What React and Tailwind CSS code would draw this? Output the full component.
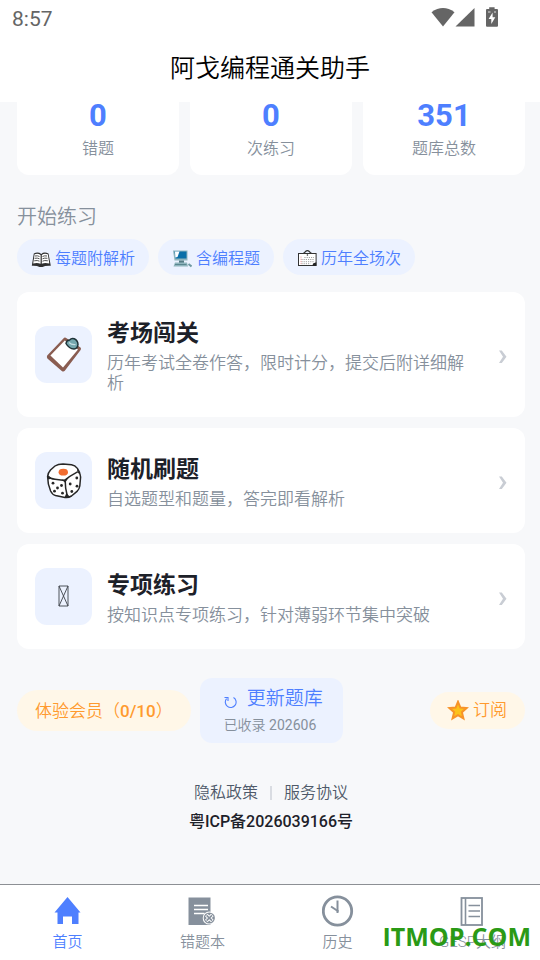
import clsx from 'clsx';

const stats = [
    { value: '0', label: '错题' },
    { value: '0', label: '次练习' },
    { value: '351', label: '题库总数' },
];

const chips = [
    { label: '每题附解析', Icon: BookIcon },
    { label: '含编程题', Icon: ComputerIcon },
    { label: '历年全场次', Icon: CalendarIcon },
];

const modes = [
    { title: '考场闯关', desc: '历年考试全卷作答，限时计分，提交后附详细解析', Icon: ClipboardIcon },
    { title: '随机刷题', desc: '自选题型和题量，答完即看解析', Icon: DiceIcon },
    { title: '专项练习', desc: '按知识点专项练习，针对薄弱环节集中突破', Icon: MissingIcon },
];

const tabs = [
    { label: '首页', Icon: HomeIcon, active: true },
    { label: '错题本', Icon: WrongBookIcon },
    { label: '历史', Icon: ClockIcon },
    { label: 'GESP大纲', Icon: OutlineIcon },
];

function BookIcon() {
    return (
        <svg viewBox="0 0 20 20" className="h-5 w-5" aria-hidden="true">
            <path d="M0.8 16.8 L2.8 4.5 Q7 2.5 10.3 5 Q13 2.5 17.5 4.5 L19.8 16.8 Q14 16.5 11.5 18 H8.5 Q6 16.5 0.8 16.8 Z" fill="#2f2f2f" />
            <path d="M3.6 5.2 Q7 4 9.6 6 V14.8 Q6 13.2 2.2 14.6 Z" fill="#fff" />
            <path d="M16.8 5.2 Q13 4 10.8 6 V14.8 Q14 13.2 18.3 14.6 Z" fill="#fff" />
            <path d="M4 7 Q6.5 6.4 8.5 7.5 M3.6 9.3 Q6.5 8.7 8.5 9.8 M3.2 11.8 Q6.5 11 8.5 12.2 M16 7 Q13.5 6.4 11.5 7.5 M16.4 9.3 Q13.5 8.7 11.5 9.8 M16.8 11.8 Q13.5 11 11.5 12.2" fill="none" stroke="#555" strokeWidth="1" />
        </svg>
    );
}

function ComputerIcon() {
    return (
        <svg viewBox="0 0 20 20" className="h-5 w-5" aria-hidden="true">
            <path d="M1 1.5 H15.5 V11.5 H2.5 Z" fill="#8fb5bd" />
            <path d="M2.5 2.5 H14.5 V9.5 H3.5 Z" fill="#0a6fa8" />
            <path d="M3 2.5 H7.5 L5.5 8 L3.3 8.5 Z" fill="#fff" />
            <path d="M7 11.5 H12 V14 H7 Z" fill="#557b84" />
            <path d="M3 13.5 H15 L16 17.5 H1.5 Z" fill="#8fb5bd" />
            <path d="M3 15.5 H14.5" stroke="#5b8790" strokeWidth="1" />
            <path d="M16.5 15 L19.5 17.5" stroke="#6f99a2" strokeWidth="2" />
        </svg>
    );
}

function CalendarIcon() {
    return (
        <svg viewBox="0 0 20 20" className="h-5 w-5" aria-hidden="true">
            <path d="M6.2 4.5 Q7.5 4 8.5 2.5 Q10.4 0.7 12.3 2.5 Q13.3 4 14.8 4.5" fill="none" stroke="#333" strokeWidth="1.3" />
            <rect x="1.5" y="4.5" width="17.6" height="12" fill="#fff" stroke="#333" strokeWidth="1" />
            <circle cx="10.4" cy="6" r="0.8" fill="#333" />
            <path d="M7.4 8.5 H17 M4.4 10.5 H17 M4.4 12.7 H17 M4.4 14.7 H13.4" stroke="#999" strokeWidth="0.9" strokeDasharray="1.2 1" />
            <path d="M4 7.5 V15" stroke="#f3a2a2" strokeWidth="1" strokeDasharray="1.2 1" />
            <path d="M19.3 13.3 V16.7 H15.5 L16 14.5 Z" fill="#222" />
        </svg>
    );
}

function ClipboardIcon() {
    return (
        <svg viewBox="0 0 36 36" className="h-9 w-9" aria-hidden="true">
            <path d="M19.8 0.8 L34.5 10.5 Q35.5 11.5 34.6 13 L18.8 33.8 Q17.5 35.2 15.8 34 L1.4 21.5 Q0.4 20 1.2 18.5 L17.4 1.4 Q18.5 0.2 19.8 0.8 Z" fill="#8a5d51" />
            <path d="M18.8 3.6 L32 12.6 L17 30.6 L4.4 18.6 Z" fill="#fff" />
            <path d="M20 6.5 Q20.5 3.2 23.6 3 Q25.5 0.8 28.2 1.8 Q31.8 3.4 32 7.5 Q31.5 11.6 28 12 Q23 11.8 20 6.5 Z" fill="#74a7ae" stroke="#1f3338" strokeWidth="1.5" />
            <path d="M23 5.5 Q25.5 8 29.5 7.5" fill="none" stroke="#c5dfe3" strokeWidth="1.2" />
        </svg>
    );
}

function DiceIcon() {
    return (
        <svg viewBox="0 0 36 36" className="h-9 w-9" aria-hidden="true">
            <path d="M1.6 13.5 Q1.8 10 4.5 7 L9 3 Q12 0.9 17 0.9 L25.5 1.8 Q29 2.4 31.4 5.4 Q34.4 9.6 34.6 14 L33.8 23 Q33.4 26 31 28.4 L25.5 33 Q22.5 34.9 19 34.4 L9.5 32.6 Q6.4 31.8 4.6 28 Q1.6 21 1.6 13.5 Z" fill="#fff" stroke="#272727" strokeWidth="1.5" />
            <path d="M2 13.6 Q4 15.6 9 16.2 L18.6 17.4 Q23.5 13 31.5 8.8 M19.2 17.5 Q19 25 21.5 34" fill="none" stroke="#272727" strokeWidth="1.5" />
            <path d="M15.5 16.6 L19.2 19.8 L22.5 14.8 L18.6 16.8 Z M31 5 L34.6 12 L31.4 9.4 Z M1.5 12 L6 15.4 L2.2 16.5 Z M20.4 30 L24 34 L18.5 34.4 Z" fill="#272727" />
            <ellipse cx="17.3" cy="9.2" rx="4.7" ry="3.4" fill="#f26d30" />
            <g fill="#272727">
                <circle cx="7" cy="20.2" r="1.4" />
                <circle cx="15.5" cy="22.5" r="1.4" />
                <circle cx="11.5" cy="25" r="1.4" />
                <circle cx="8.5" cy="28.2" r="1.4" />
                <circle cx="16.5" cy="30.2" r="1.4" />
                <circle cx="24.2" cy="21" r="1.4" />
                <circle cx="30.8" cy="15" r="1.4" />
                <circle cx="25.8" cy="28.5" r="1.4" />
                <circle cx="31" cy="23.2" r="1.4" />
            </g>
        </svg>
    );
}

// Empty glyph box
function MissingIcon() {
    return (
        <svg viewBox="0 0 36 36" className="h-9 w-9" aria-hidden="true">
            <path d="M13 7 H22 V27 H13 Z M13 7 L22 27 M22 7 L13 27" fill="none" stroke="#3c4148" strokeWidth="0.9" />
        </svg>
    );
}

function HomeIcon() {
    return (
        <svg viewBox="0 0 32 32" className="h-8 w-8" fill="currentColor" aria-hidden="true">
            <path d="M15.5 2 L28.5 17.5 H26.5 V29 H20 V21.5 H11 V29 H5.5 V17.5 H2.5 Z" />
        </svg>
    );
}

function WrongBookIcon() {
    return (
        <svg viewBox="0 0 32 32" className="h-8 w-8" aria-hidden="true">
            <path d="M1.5 2.5 H23.5 V30 H1.5 Z" fill="currentColor" />
            <path d="M7 10.5 H21 M7 14.5 H21 M7 18.5 H17.5" stroke="#fff" strokeWidth="1.6" />
            <circle cx="22.3" cy="23" r="6.6" fill="#fff" />
            <circle cx="22.3" cy="23" r="5.6" fill="currentColor" />
            <path d="M19.3 20 L25.3 26 M25.3 20 L19.3 26" stroke="#fff" strokeWidth="3.6" />
            <path d="M19.6 20.4 L25 25.6 M25 20.4 L19.6 25.6" stroke="currentColor" strokeWidth="1.6" />
        </svg>
    );
}

function ClockIcon() {
    return (
        <svg viewBox="0 0 32 32" className="h-8 w-8" fill="none" stroke="currentColor" aria-hidden="true">
            <circle cx="15.5" cy="16" r="14.2" strokeWidth="2.8" />
            <path d="M15.5 5.5 V18" strokeWidth="2" />
            <path d="M9 11.5 L16.5 16.5" strokeWidth="2" />
        </svg>
    );
}

function OutlineIcon() {
    return (
        <svg viewBox="0 0 32 32" className="h-8 w-8" fill="none" stroke="currentColor" aria-hidden="true">
            <rect x="4.5" y="3" width="20.5" height="27" strokeWidth="1.8" />
            <path d="M8.5 3 V30" strokeWidth="1.6" />
            <path d="M11.5 10.5 H23 M11.5 16 H23 M11.5 21.5 H23" strokeWidth="1.5" />
        </svg>
    );
}

function StatusBar() {
    return (
        <div className="flex h-9 items-center justify-between pr-[41px] pl-3 text-[#656565]">
            <span className="pt-1 text-[21px] font-normal">8:57</span>
            <div className="flex items-center">
                <svg viewBox="0 0 24 20" className="h-5 w-6" fill="currentColor" aria-hidden="true">
                    <path d="M0.5 4.2 Q12 -4 23.5 4.2 L12 18.5 Z" />
                </svg>
                <svg viewBox="0 0 20 20" className="h-5 w-5" fill="currentColor" aria-hidden="true">
                    <path d="M19.5 0 V18.5 H0.5 Z" />
                </svg>
                <svg viewBox="0 0 14 20" className="ml-2.5 h-5 w-3.5 overflow-visible" aria-hidden="true">
                    <path d="M4.2 -0.8 H9.6 V1 H12 Q13 1 13 2 V17.8 Q13 18.8 12 18.8 H2 Q1 18.8 1 17.8 V2 Q1 1 2 1 H4.2 Z" fill="currentColor" />
                    <path d="M7.6 4.4 L3.6 11 H6.3 V16 L10.3 9.2 H7.6 Z" fill="#fff" />
                    <path d="M3 4 H5.5 M9 4 H11" stroke="#fff" strokeWidth="0.8" />
                </svg>
            </div>
        </div>
    );
}

function ModeCard({ title, desc, Icon }) {
    return (
        <button type="button" className="flex w-full items-center rounded-xl bg-white px-[18px] py-6 text-left">
            <span className="flex h-[57px] w-[57px] shrink-0 items-center justify-center rounded-xl bg-[#ecf2ff]">
                <Icon />
            </span>
            <span className="ml-[15px] flex flex-1 flex-col gap-0.5">
                <span className="text-[23px] leading-[35px] font-bold text-[#1d2129]">{title}</span>
                <span className="text-[17px] leading-5 text-[#86909c]">{desc}</span>
            </span>
            <svg viewBox="0 0 8 14" className="mt-1 ml-7 h-3.5 w-2 shrink-0" fill="#c9cdd4" aria-hidden="true">
                <path d="M0 0.5 H2.8 L7.5 6.8 L2.8 13 H0 L4 6.8 Z" />
            </svg>
        </button>
    );
}

export default function App() {
    return (
        <div className="flex min-h-screen flex-col bg-[#f7f8fa] font-['Roboto','Noto_Sans_CJK_SC',sans-serif] font-[350]">
            <header className="bg-white">
                <StatusBar />
                <h1 className="flex h-[66px] items-center justify-center text-[25px] text-black">阿戈编程通关助手</h1>
            </header>

            <main className="flex-1 pr-[15px] pl-[17px]">
                {/* Stats */}
                <section className="grid grid-cols-3 gap-[11px]">
                    {stats.map((item) => (
                        <div key={item.label} className="flex flex-col items-center gap-[9px] rounded-b-xl bg-white pb-4">
                            <span className="text-[31px] leading-7 font-bold text-[#4e7fff]">{item.value}</span>
                            <span className="text-base leading-5 text-[#86909c]">{item.label}</span>
                        </div>
                    ))}
                </section>

                <h2 className="mt-7 text-xl leading-7 text-[#86909c]">开始练习</h2>
                <ul className="mt-2 flex gap-[9px]">
                    {chips.map(({ label, Icon }) => (
                        <li key={label} className="flex h-9 items-center gap-1 rounded-full bg-[#ecf2ff] px-3.5 pt-1 text-base text-[#4e7fff]">
                            <Icon />
                            {label}
                        </li>
                    ))}
                </ul>

                {/* Practice modes */}
                <section className="mt-[17px] flex flex-col gap-[11px]">
                    {modes.map((mode) => (
                        <ModeCard key={mode.title} {...mode} />
                    ))}
                </section>

                {/* Membership / update / subscribe */}
                <section className="mt-[29px] flex items-center gap-[9px]">
                    <button type="button" className="h-[41px] rounded-full bg-[#fff7e8] px-[18px] pt-0.5 text-[17px] text-[#ff9a2e]">
                        体验会员（<span className="font-medium">0/10</span>）
                    </button>
                    <button type="button" className="flex h-[65px] flex-col items-start justify-center rounded-xl bg-[#ecf2ff] pr-5 pl-6">
                        <span className="flex items-center gap-2.5 text-[19px] leading-7 text-[#4e7fff]">
                            <svg viewBox="0 0 13 13" className="mt-2 h-[13px] w-[13px]" fill="none" stroke="currentColor" aria-hidden="true">
                                <path d="M9.5 1.5 A5.4 5.4 0 1 1 2.6 2.6" strokeWidth="1.1" />
                                <path d="M0.5 1.5 H4 V5" strokeWidth="1.1" />
                            </svg>
                            更新题库
                        </span>
                        <span className="text-sm leading-6 text-[#86909c]">
                            已收录 <span className="font-normal">202606</span>
                        </span>
                    </button>
                    <button type="button" className="ml-auto flex h-[37px] items-center gap-1 rounded-full bg-[#fff7e8] pr-[18px] pl-[17px] text-[17px] text-[#ff9a2e]">
                        <svg viewBox="0 0 22 22" className="h-[22px] w-[22px]" aria-hidden="true">
                            <path d="M11 1.8 L13.4 7.6 L19.6 8 L14.9 12.2 L16.4 18.4 L11 15.1 L5.6 18.4 L7.1 12.2 L2.4 8 L8.6 7.6 Z" fill="#fcc21b" stroke="#f79329" strokeWidth="2" />
                        </svg>
                        订阅
                    </button>
                </section>

                {/* Legal */}
                <footer className="mt-[38px] flex flex-col items-center gap-[5px] pb-4 text-base leading-6">
                    <div className="flex items-center gap-3 text-[#4e5969]">
                        <a href="#privacy">隐私政策</a>
                        <span className="h-3.5 w-0.5 bg-[#d9dce2]" />
                        <a href="#terms">服务协议</a>
                    </div>
                    <p className="font-medium text-[#1d2129]">粤ICP备2026039166号</p>
                </footer>
            </main>

            <nav className="relative grid grid-cols-4 border-t border-[#8c8f94] bg-white pt-2.5 pb-2">
                {tabs.map(({ label, Icon, active }) => (
                    <a
                        key={label}
                        href="#tab"
                        className={clsx('flex flex-col items-center gap-[5px] text-[15px] leading-5', active ? 'text-[#4e7fff]' : 'text-[#86909c]')}
                    >
                        <Icon />
                        {label}
                    </a>
                ))}
                <span className="absolute right-[9px] bottom-2 font-['Open_Sans',sans-serif] text-[25px] leading-8 font-bold text-[#2a9a16]">ITMOP.COM</span>
            </nav>
        </div>
    );
}
